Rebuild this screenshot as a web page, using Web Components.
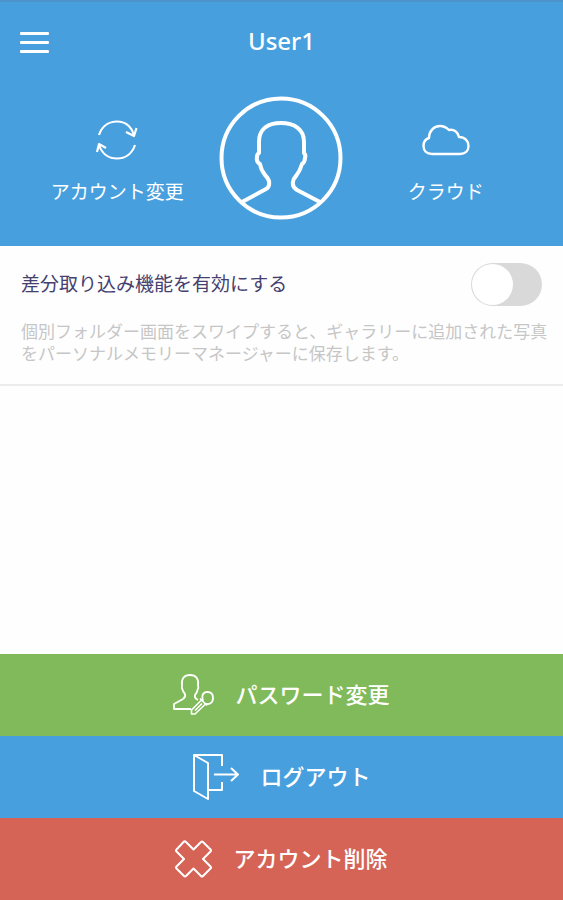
<!DOCTYPE html>
<html lang="ja">
<head>
<meta charset="utf-8">
<meta name="viewport" content="width=device-width, initial-scale=1">
<title>User1</title>
<style>
  body {
    margin: 0;
    background: #fefefe;
    font-family: "Noto Sans CJK JP", "Noto Sans", sans-serif;
  }
</style>
</head>
<body>
<account-page>
  <profile-header slot="header" name="User1">
    <header-link slot="left" icon="sync">アカウント変更</header-link>
    <header-link slot="right" icon="cloud">クラウド</header-link>
  </profile-header>
  <setting-switch label="差分取り込み機能を有効にする">個別フォルダー画面をスワイプすると、ギャラリーに追加された写真をパーソナルメモリーマネージャーに保存します。</setting-switch>
  <action-button slot="actions" icon="password" class="green">パスワード変更</action-button>
  <action-button slot="actions" icon="logout" class="blue">ログアウト</action-button>
  <action-button slot="actions" icon="remove" class="red">アカウント削除</action-button>
</account-page>

<script>
const icons = {
  sync: `<svg width="42" height="42" viewBox="0 0 42 42" stroke-width="2.2">
    <path d="M3 16C6 7 13 2.500 21 2.500C29 2.500 35 7 38 16M30 13L38 17L40.500 9"/>
    <path d="M39 26C36 35 29 39.500 21 39.500C13 39.500 6 35 3 26M1 33L3 25L10 29"/>
  </svg>`,
  cloud: `<svg width="48" height="42" viewBox="0 0 48 42" stroke-width="2.4">
    <path d="M10 35C5 35 1.500 32 1.500 27C1.500 23 4 20 7 19C7 12 12 7 18 7C22 7 25 9 27 11C32 10 36 13 37 18C43 18 46.500 22 46.500 27C46.500 32 43 35 38 35Z"/>
  </svg>`,
  password: `<svg width="41" height="46" viewBox="0 0 41 46" stroke-width="1.800">
    <path d="M18 37H1V32L10 27Q13 25 12 22Q10 20 9.500 17.500Q8.500 16 9 13.500C8 7 11 3 17 3C23 3 26 7 25 13.500Q26 16 24.500 18Q24 21 22 23Q21 26 25 28"/>
    <path d="M30 29C28 22 31 20 34.500 20C38 20 40 22.500 40 26C40 31 36 33 32 31.500"/>
    <path d="M27 26.500L34 33.500M28.500 28L18.500 38V42H22L32.500 32M22 38.500L29 31.500" stroke-width="1.600"/>
  </svg>`,
  logout: `<svg width="47" height="46" viewBox="0 0 47 46" stroke-width="2">
    <path d="M30 12V1H2V37L16 45V9L2 1M16 36H30V28"/>
    <path d="M22 20.500H46M39 14L46 20.500L39 27"/>
  </svg>`,
  remove: `<svg width="37" height="38" viewBox="0 0 37 38" stroke-width="2">
    <path d="M9 1.500Q10 1 11 2L18.500 9.500L26 2Q27 1 28 2L35.500 9.500Q36.500 10.500 35.500 11.500L28 19L35.500 26.500Q36.500 27.500 35.500 28.500L28 36Q27 37 26 36L18.500 28.500L11 36Q10 37 9 36L1.500 28.500Q.5 27.500 1.500 26.500L9 19L1.500 11.500Q.5 10.500 1.500 9.500Z"/>
  </svg>`
};

class AccountPage extends HTMLElement {
  constructor() {
    super();
    this.attachShadow({ mode: 'open' });
    this.shadowRoot.innerHTML = `<style>
  :host {
    display: flex;
    flex-direction: column;
    min-height: 100vh;
  }

  main {
    flex: 1;
  }
</style>
      <slot name="header"></slot>
      <main><slot></slot></main>
      <footer><slot name="actions"></slot></footer>`;
  }
}

class ProfileHeader extends HTMLElement {
  constructor() {
    super();
    this.attachShadow({ mode: 'open' });
    this.shadowRoot.innerHTML = `<style>
  :host {
    display: block;
    background: #479fde;
    border-top: 2px solid #4c92cb;
    color: #fff;
  }

  .bar {
    align-items: center;
    display: grid;
    grid-template-columns: 1fr auto 1fr;
    height: 80px;
    padding: 0 20px;
  }

  .menu {
    background: none;
    border: 0;
    cursor: pointer;
    display: grid;
    gap: 6px;
    padding: 0;
    width: 29px;
  }

  .menu span {
    background: #fff;
    border-radius: 1px;
    height: 3px;
  }

  h1 {
    font: 500 24px/32px "Noto Sans", sans-serif;
    margin: 0;
    padding-bottom: 2px;
  }

  .profile {
    display: grid;
    grid-template-columns: repeat(3, 1fr);
    justify-items: center;
    padding: 14px 35px 26px;
  }

  svg {
    display: block;
    fill: none;
    stroke: #fff;
    stroke-width: 4;
    stroke-linejoin: round;
  }
</style>
      <div class="bar">
        <button class="menu" aria-label="メニュー"><span></span><span></span><span></span></button>
        <h1></h1>
      </div>
      <div class="profile">
        <slot name="left"></slot>
        <svg width="124" height="124" viewBox="0 0 124 124">
          <circle cx="62" cy="62" r="59.500"/>
          <path d="M23 106L47 93Q51 91 50 85Q49 82 46 79Q42 74 41 68Q37 66 38 61Q38 58 40 57V46C40 33 49 27 62 27C75 27 85 33 85 46V57Q87 59 86 62Q86 66 83 68Q81 75 77 80Q74 83 74 86Q73 91 78 94L101 106"/>
        </svg>
        <slot name="right"></slot>
      </div>`;
  }

  connectedCallback() {
    this.shadowRoot.querySelector('h1').textContent = this.getAttribute('name');
  }
}

class HeaderLink extends HTMLElement {
  constructor() {
    super();
    this.attachShadow({ mode: 'open' });
    this.shadowRoot.innerHTML = `<style>
  :host {
    display: block;
    padding-top: 23px;
  }

  a {
    align-items: center;
    color: #fff;
    display: flex;
    flex-direction: column;
    font-size: 19px;
    gap: 17px;
    line-height: 26px;
    text-decoration: none;
    white-space: nowrap;
  }

  svg {
    display: block;
    fill: none;
    stroke: #fff;
    stroke-linejoin: round;
  }
</style>
      <a href="#">${icons[this.getAttribute('icon')]}<span><slot></slot></span></a>`;
  }
}

class SettingSwitch extends HTMLElement {
  constructor() {
    super();
    this.attachShadow({ mode: 'open' });
    this.shadowRoot.innerHTML = `<style>
  :host {
    display: block;
    border-bottom: 2px solid #ececec;
    padding: 17px 14px 20px 21px;
  }

  .row {
    align-items: center;
    display: flex;
    justify-content: space-between;
    padding-right: 7px;
  }

  label {
    color: #45406f;
    font-size: 19px;
    line-height: 28px;
    padding-bottom: 4px;
  }

  input {
    appearance: none;
    background: #d9d9d9;
    border-radius: 22px;
    box-sizing: border-box;
    cursor: pointer;
    display: flex;
    height: 43px;
    margin: 0;
    padding: 1px;
    width: 71px;
  }

  input::before {
    background: #fff;
    border-radius: 50%;
    content: "";
    height: 41px;
    width: 41px;
  }

  input:checked {
    background: #479fde;
    justify-content: flex-end;
  }

  p {
    color: #c6c6c6;
    font-size: 17px;
    line-height: 22px;
    margin: 14px 0 0;
  }
</style>
      <div class="row">
        <label for="toggle">${this.getAttribute('label')}</label>
        <input type="checkbox" role="switch" id="toggle">
      </div>
      <p><slot></slot></p>`;
  }
}

class ActionButton extends HTMLElement {
  constructor() {
    super();
    this.attachShadow({ mode: 'open' });
    this.shadowRoot.innerHTML = `<style>
  :host {
    display: block;
  }

  :host(.green) { background: #80ba5a; }
  :host(.blue) { background: #479fde; }
  :host(.red) { background: #d56456; }

  button {
    align-items: center;
    background: none;
    border: 0;
    color: #fff;
    cursor: pointer;
    display: flex;
    font-family: inherit;
    font-size: 22px;
    font-weight: 500;
    gap: 21px;
    height: 82px;
    justify-content: center;
    line-height: 32px;
    padding: 0;
    width: 100%;
  }

  span {
    padding-bottom: 4px;
  }

  svg {
    fill: none;
    stroke: #fff;
    stroke-linejoin: round;
  }
</style>
      <button>${icons[this.getAttribute('icon')]}<span><slot></slot></span></button>`;
  }
}

customElements.define('account-page', AccountPage);
customElements.define('profile-header', ProfileHeader);
customElements.define('header-link', HeaderLink);
customElements.define('setting-switch', SettingSwitch);
customElements.define('action-button', ActionButton);
</script>
</body>
</html>
